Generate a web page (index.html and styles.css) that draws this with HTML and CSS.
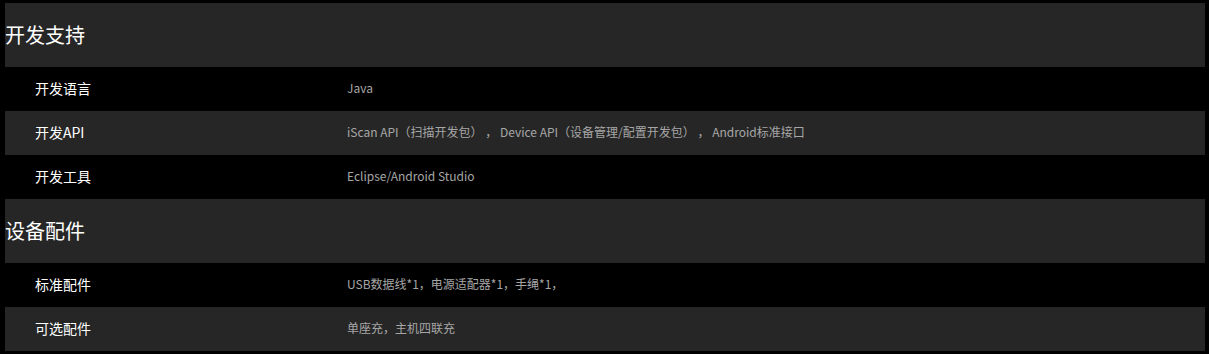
FILE: index.html
```html
<!DOCTYPE html>
<html lang="zh-CN">
<head>
<meta charset="utf-8">
<link rel="stylesheet" href="styles.css">
</head>
<body>
<div class="spec">
  <div class="section">
    <div class="head">开发支持</div>
    <div class="row"><div class="label">开发语言</div><div class="value">Java</div></div>
    <div class="row alt"><div class="label">开发API</div><div class="value">iScan API（扫描开发包） ， Device API（设备管理/配置开发包） ， Android标准接口</div></div>
    <div class="row"><div class="label">开发工具</div><div class="value">Eclipse/Android Studio</div></div>
  </div>
  <div class="section">
    <div class="head">设备配件</div>
    <div class="row"><div class="label">标准配件</div><div class="value">USB数据线*1，电源适配器*1，手绳*1，</div></div>
    <div class="row alt"><div class="label">可选配件</div><div class="value">单座充，主机四联充</div></div>
  </div>
</div>
</body>
</html>
```
FILE: styles.css
```css
html, body {
  margin: 0;
  padding: 0;
  background: #000;
}
body {
  padding: 3px 4px 3px 5px;
  font-family: "Noto Sans CJK SC", "Open Sans", sans-serif;
}
.spec {
  width: 1200px;
}
.head {
  height: 64px;
  background: #262626;
  color: #fff;
  font-size: 20px;
  line-height: 64px;
}
.row {
  display: grid;
  grid-template-columns: 312px 1fr;
  height: 44px;
  align-items: center;
  background: #000;
}
.row.alt {
  background: #262626;
}
.label {
  padding-left: 30px;
  color: #fff;
  font-size: 14px;
  font-weight: 400;
  line-height: 20px;
  margin-top: -2px;
}
.value {
  padding-left: 30px;
  color: #a6a6a6;
  font-size: 12px;
  line-height: 18px;
  margin-top: -2px;
}
```
